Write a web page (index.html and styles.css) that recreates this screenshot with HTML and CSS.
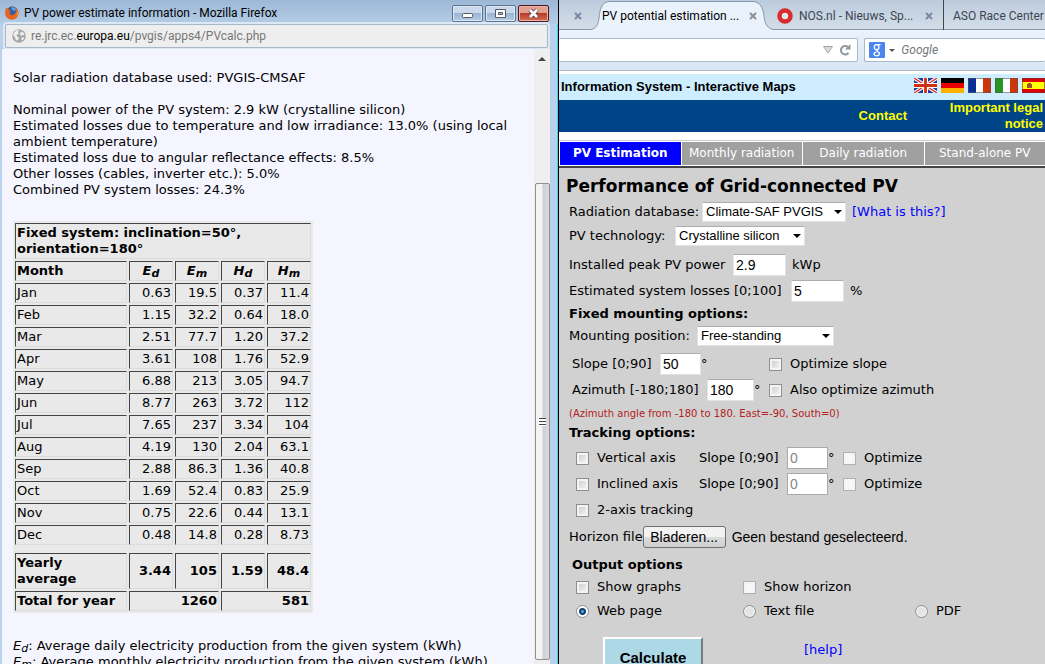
FILE: index.html
```html
<!DOCTYPE html>
<html lang="en">
<head>
<meta charset="utf-8">
<title>PV power estimate information</title>
<link rel="stylesheet" href="styles.css">
</head>
<body>
<main class="desktop">
  <section class="popup">
    <header class="titlebar">
      <svg class="fox" viewBox="0 0 14 14" aria-hidden="true"><circle cx="7" cy="7" r="6.5" fill="#d9541b"/><circle cx="7.4" cy="5.4" r="4.8" fill="#2b5ea8"/><path d="M6 1.5c2-.8 4.500 0 5.500 2L9 5 6.500 3.500z" fill="#5f9fd8"/><path d="M.6 3 2 1.500l.6 1.500 2.200.2-.6 1.500 2 1-1.700 1.300c.5 2 3 2.400 4.600 1.300 1.700-1.200 2-3.300 1.700-5.300 2 2 2.900 4.200 2.300 6-1 3.500-3.600 4.700-6.300 4.600C3 13.500.5 11 .3 7.500z" fill="#e6651e"/><path d="M12.800 5c.8 3.500-1.500 6.800-5 7.200 3-.2 4.500-2.800 4.200-5.200z" fill="#fbc634"/></svg>
      <h1 class="window-title">PV power estimate information - Mozilla Firefox</h1>
      <div class="window-buttons">
        <button class="win-btn" aria-label="Minimize"><svg viewBox="0 0 13 11"><rect x="1.500" y="5.500" width="10" height="4" rx="1" fill="#fff" stroke="#545a66"/></svg></button>
        <button class="win-btn" aria-label="Maximize"><svg viewBox="0 0 13 11"><path d="M1.500 1.500h10v8h-10z" fill="#fff" stroke="#545a66"/><path d="M4.500 4.500h4v2h-4z" fill="#a9c1dc" stroke="#545a66"/></svg></button>
        <button class="win-btn win-close" aria-label="Close"><svg viewBox="0 0 13 11"><path d="M3 2l7 7M10 2l-7 7" stroke="#5b4a55" stroke-width="4.500"/><path d="M3 2l7 7M10 2l-7 7" stroke="#fff" stroke-width="2.600"/></svg></button>
      </div>
    </header>
    <div class="popup-body">
      <div class="address">
        <svg class="globe" viewBox="0 0 14 14" aria-hidden="true"><circle cx="7" cy="7" r="6.800" fill="#a6a6a6"/><path d="M2 3.500 5 1l2.500.5L6 3l1 1.500L4.500 6l.5 1.500 2 1L6 11l-2 .5-1-3-1.800-2zM9 2.500l2.500 1 1 3-2-.5-1.500 1-1-2zM9 9l2.500-1 .5 1.500-2 2z" fill="#eee"/></svg>
        <span>re.jrc.ec.<b>europa.eu</b>/pvgis/apps4/PVcalc.php</span>
      </div>
      <div class="viewport">
        <article class="report">
          <p>Solar radiation database used: PVGIS-CMSAF</p>
          <p>Nominal power of the PV system: 2.9 kW (crystalline silicon)<br>
          Estimated losses due to temperature and low irradiance: 13.0% (using local<br>
          ambient temperature)<br>
          Estimated loss due to angular reflectance effects: 8.5%<br>
          Other losses (cables, inverter etc.): 5.0%<br>
          Combined PV system losses: 24.3%</p>
          <table class="results">
            <colgroup><col class="month-col"><col><col><col><col></colgroup>
            <thead>
              <tr><th colspan="5">Fixed system: inclination=50°,<br>orientation=180°</th></tr>
              <tr><th>Month</th><th class="sym">E<sub>d</sub></th><th class="sym">E<sub>m</sub></th><th class="sym">H<sub>d</sub></th><th class="sym">H<sub>m</sub></th></tr>
            </thead>
            <tbody>
              <tr><td>Jan</td><td>0.63</td><td>19.5</td><td>0.37</td><td>11.4</td></tr>
              <tr><td>Feb</td><td>1.15</td><td>32.2</td><td>0.64</td><td>18.0</td></tr>
              <tr><td>Mar</td><td>2.51</td><td>77.7</td><td>1.20</td><td>37.2</td></tr>
              <tr><td>Apr</td><td>3.61</td><td>108</td><td>1.76</td><td>52.9</td></tr>
              <tr><td>May</td><td>6.88</td><td>213</td><td>3.05</td><td>94.7</td></tr>
              <tr><td>Jun</td><td>8.77</td><td>263</td><td>3.72</td><td>112</td></tr>
              <tr><td>Jul</td><td>7.65</td><td>237</td><td>3.34</td><td>104</td></tr>
              <tr><td>Aug</td><td>4.19</td><td>130</td><td>2.04</td><td>63.1</td></tr>
              <tr><td>Sep</td><td>2.88</td><td>86.3</td><td>1.36</td><td>40.8</td></tr>
              <tr><td>Oct</td><td>1.69</td><td>52.4</td><td>0.83</td><td>25.9</td></tr>
              <tr><td>Nov</td><td>0.75</td><td>22.6</td><td>0.44</td><td>13.1</td></tr>
              <tr><td>Dec</td><td>0.48</td><td>14.8</td><td>0.28</td><td>8.73</td></tr>
              <tr class="spacer"><td colspan="5"></td></tr>
            </tbody>
            <tfoot>
              <tr><td>Yearly<br>average</td><td>3.44</td><td>105</td><td>1.59</td><td>48.4</td></tr>
              <tr><td>Total for year</td><td colspan="2">1260</td><td colspan="2">581</td></tr>
            </tfoot>
          </table>
          <p class="legend"><i>E<sub>d</sub></i>: Average daily electricity production from the given system (kWh)<br>
          <i>E<sub>m</sub></i>: Average monthly electricity production from the given system (kWh)</p>
        </article>
        <div class="scrollbar" aria-hidden="true">
          <span class="arrow-up"></span>
          <span class="thumb"><span class="grip"></span></span>
        </div>
      </div>
    </div>
  </section>

  <section class="browser">
    <nav class="tabstrip">
      <div class="tab tab-first"><button class="tab-close" aria-label="Close tab"><svg viewBox="0 0 8 8"><path d="M1 1l6 6M7 1l-6 6"/></svg></button></div>
      <div class="tab tab-active">
        <svg class="tab-shape" viewBox="0 0 184 30" preserveAspectRatio="none" aria-hidden="true"><path d="M0 29.500C6 29 8 25 9 18 10 8 12 1.500 20 1.500H162c8 0 11 6 12 15 1 8 4 12.500 10 13V30H0z" fill="#eaf2fb"/><path d="M0 29.500C6 29 8 25 9 18 10 8 12 1.500 20 1.500H162c8 0 11 6 12 15 1 8 4 12.500 10 13" fill="none" stroke="#8797ac"/></svg>
        <span class="tab-label">PV potential estimation ...</span>
        <button class="tab-close grey" aria-label="Close tab"><svg viewBox="0 0 8 8"><path d="M1 1l6 6M7 1l-6 6"/></svg></button>
      </div>
      <div class="tab tab-nos">
        <svg class="ring" viewBox="0 0 16 16" aria-hidden="true"><circle cx="8" cy="8" r="5.500" fill="#dfe6ee" stroke="#d92b2b" stroke-width="4.500"/></svg>
        <span class="tab-label">NOS.nl - Nieuws, Sp...</span>
        <button class="tab-close" aria-label="Close tab"><svg viewBox="0 0 8 8"><path d="M1 1l6 6M7 1l-6 6"/></svg></button>
      </div>
      <div class="tab tab-aso"><span class="tab-label">ASO Race Center</span></div>
    </nav>
    <div class="toolbar">
      <div class="url-box">
        <input class="url-input" type="text" aria-label="Address">
        <svg class="url-drop" viewBox="0 0 10 8" aria-hidden="true"><path d="M.5.5h9L5 7z" fill="#dcdcdc" stroke="#a5a5a5"/></svg>
        <button class="reload" aria-label="Reload"><svg viewBox="0 0 12 12"><path d="M9 3.200A4.200 4.200 0 1 0 9.500 8.800" fill="none" stroke="#8f989f" stroke-width="2"/><path d="M11.500 0v5.500H6z" fill="#8f989f"/></svg></button>
      </div>
      <div class="search-box">
        <svg class="g-logo" viewBox="0 0 16 16" aria-hidden="true"><rect width="16" height="16" rx="1" fill="#4a86ee"/><ellipse cx="7.600" cy="5.200" rx="2.300" ry="2.500" fill="none" stroke="#fff" stroke-width="1.300"/><path d="M8.500 2.600H11.500M9 7.500c-2 1-1.500 1.500 0 2.300 2.700 1.200 1.500 4-1.300 4-3.200 0-3.600-3-.4-3.600" fill="none" stroke="#fff" stroke-width="1.300"/></svg>
        <span class="g-drop"></span>
        <input class="search-input" type="text" placeholder="Google" aria-label="Search">
      </div>
    </div>
    <div class="site">
      <div class="site-head">
        <strong>Information System - Interactive Maps</strong>
        <div class="flags">
          <svg viewBox="0 0 23 15" role="img" aria-label="English"><path fill="#263b93" d="M0 0h23v15H0z"/><path d="M0 0l23 15M23 0L0 15" stroke="#fff" stroke-width="3.500"/><path d="M0 0l23 15M23 0L0 15" stroke="#d22" stroke-width="1.200"/><path d="M11.500 0v15M0 7.500h23" stroke="#fff" stroke-width="5"/><path d="M11.500 0v15M0 7.500h23" stroke="#d03010" stroke-width="2.800"/></svg>
          <svg viewBox="0 0 23 15" role="img" aria-label="German"><path d="M0 0h23v5H0z"/><path fill="#e80000" d="M0 5h23v5H0z"/><path fill="#fcb000" d="M0 10h23v5H0z"/></svg>
          <svg viewBox="0 0 23 15" role="img" aria-label="French"><path fill="#fff" d="M0 0h23v15H0z"/><path fill="#0b2d9a" d="M0 0h8v15H0z"/><path fill="#d0350a" d="M15 0h8v15h-8z"/><path d="M.5.500h22v14H.5z" fill="none" stroke="#555" stroke-opacity=".6"/></svg>
          <svg viewBox="0 0 23 15" role="img" aria-label="Italian"><path fill="#fff" d="M0 0h23v15H0z"/><path fill="#299426" d="M0 0h8v15H0z"/><path fill="#d0350a" d="M15 0h8v15h-8z"/><path d="M.5.500h22v14H.5z" fill="none" stroke="#555" stroke-opacity=".6"/></svg>
          <svg viewBox="0 0 23 15" role="img" aria-label="Spanish"><path fill="#e00000" d="M0 0h23v15H0z"/><path fill="#ff0" d="M0 4h23v7H0z"/><path fill="#a0522d" d="M5 6h1V5h3v1h1v4H5z"/><path d="M.5.500h22v14H.5z" fill="none" stroke="#633" stroke-opacity=".6"/></svg>
        </div>
      </div>
      <div class="site-links"><a href="#contact">Contact</a><a class="legal" href="#legal">Important legal notice</a></div>
      <nav class="pv-tabs">
        <a class="current" href="#pv">PV Estimation</a><a href="#monthly">Monthly radiation</a><a href="#daily">Daily radiation</a><a href="#alone">Stand-alone PV</a>
      </nav>
      <form class="pv-form">
        <h2>Performance of Grid-connected PV</h2>
        <div class="row short">
          <label class="w-database" for="db">Radiation database:</label>
          <span class="select w-144"><select id="db"><option>Climate-SAF PVGIS</option></select></span>
          <a class="help" href="#what">[What is this?]</a>
        </div>
        <div class="row short">
          <label class="w-tech" for="tech">PV technology:</label>
          <span class="select w-130"><select id="tech"><option>Crystalline silicon</option></select></span>
        </div>
        <div class="row gap-top">
          <label class="w-peak" for="peak">Installed peak PV power</label>
          <input class="text w-52" id="peak" type="text" value="2.9"><span class="unit">kWp</span>
        </div>
        <div class="row">
          <label class="w-loss" for="loss">Estimated system losses [0;100]</label>
          <input class="text w-52" id="loss" type="text" value="5"><span class="unit">%</span>
        </div>
        <h3>Fixed mounting options:</h3>
        <div class="row short">
          <label class="w-mount" for="mount">Mounting position:</label>
          <span class="select w-136"><select id="mount"><option>Free-standing</option></select></span>
        </div>
        <div class="mount-grid">
          <div class="row"><label class="w-slope" for="slope">Slope [0;90]</label><input class="text w-40" id="slope" type="text" value="50"><span>°</span></div>
          <div class="row"><input class="check" id="opt-slope" type="checkbox"><label for="opt-slope">Optimize slope</label></div>
          <div class="row"><label class="w-azimuth" for="azimuth">Azimuth [-180;180]</label><input class="text w-46" id="azimuth" type="text" value="180"><span>°</span></div>
          <div class="row"><input class="check" id="opt-az" type="checkbox"><label for="opt-az">Also optimize azimuth</label></div>
        </div>
        <p class="note">(Azimuth angle from -180 to 180. East=-90, South=0)</p>
        <h3 class="tracking-title">Tracking options:</h3>
        <div class="track-grid">
          <div class="row"><input class="check" id="vert" type="checkbox"><label for="vert">Vertical axis</label></div>
          <div class="row"><label class="w-slope" for="vslope">Slope [0;90]</label><input class="text w-40" id="vslope" type="text" value="0" disabled><span>°</span></div>
          <div class="row"><input class="check" id="vopt" type="checkbox" disabled><label for="vopt">Optimize</label></div>
          <div class="row"><input class="check" id="incl" type="checkbox"><label for="incl">Inclined axis</label></div>
          <div class="row"><label class="w-slope" for="islope">Slope [0;90]</label><input class="text w-40" id="islope" type="text" value="0" disabled><span>°</span></div>
          <div class="row"><input class="check" id="iopt" type="checkbox" disabled><label for="iopt">Optimize</label></div>
          <div class="row"><input class="check" id="two" type="checkbox"><label for="two">2-axis tracking</label></div>
        </div>
        <div class="row file">
          <label for="horizon">Horizon file</label><button class="browse" id="horizon" type="button">Bladeren...</button><output class="file-name">Geen bestand geselecteerd.</output>
        </div>
        <h3 class="output-title">Output options</h3>
        <div class="output-grid">
          <div class="row short"><input class="check" id="graphs" type="checkbox"><label for="graphs">Show graphs</label></div>
          <div class="row short"><input class="check" id="showh" type="checkbox" disabled><label for="showh">Show horizon</label></div>
          <div></div>
          <div class="row short"><input class="radio" id="web" name="format" type="radio" checked><label for="web">Web page</label></div>
          <div class="row short"><input class="radio" id="txt" name="format" type="radio"><label for="txt">Text file</label></div>
          <div class="row short"><input class="radio" id="pdf" name="format" type="radio"><label for="pdf">PDF</label></div>
        </div>
        <div class="actions"><button class="calculate" type="button">Calculate</button><a class="help" href="#help">[help]</a></div>
      </form>
    </div>
  </section>
</main>
</body>
</html>
```

FILE: styles.css
```css
* { box-sizing: border-box; }
body { margin: 0; font: 13px/16px Verdana, "DejaVu Sans", sans-serif; color: #000; }
button, input, select { font: inherit; color: inherit; margin: 0; padding: 0; }
a { text-decoration: none; }
svg { display: block; }

.desktop {
  display: grid;
  grid-template-columns: 559fr 486fr;
  height: 100vh;
  overflow: hidden;
}

/* Result window */
.popup {
  display: flex;
  flex-direction: column;
  min-width: 0;
  min-height: 0;
  background: #b9d1ea;
  border-right: 1px solid #000;
  box-shadow: inset -1px 0 #3fd0f0;
}
.titlebar {
  display: flex;
  align-items: center;
  height: 24px;
  padding: 2px 9px 0 5px;
  background: linear-gradient(#9db8d6, #b4cde6);
  font: 12px/16px "Segoe UI", Roboto, sans-serif;
}
.fox { width: 14px; height: 14px; margin-right: 5px; }
.window-title { flex: 1; margin: 0; font-size: 12px; font-weight: 400; white-space: nowrap; }
.window-buttons { display: flex; gap: 2px; }
.win-btn {
  display: flex;
  align-items: center;
  justify-content: center;
  width: 31px;
  height: 17px;
  border: 1px solid #5c7490;
  border-radius: 2px;
  background: linear-gradient(#c9d9eb 48%, #9bb5d2 50%, #b5cde6);
  box-shadow: inset 0 0 0 1px #dbe7f3;
}
.win-btn svg { width: 13px; height: 11px; }
.win-close { border-color: #4a1420; background: linear-gradient(#e0a08f 45%, #b93c28 50%, #d46e55); box-shadow: inset 0 0 0 1px #e8b5a8; }
.popup-body {
  display: flex;
  flex: 1;
  flex-direction: column;
  min-height: 0;
  margin: 0 8px 0 2px;
}
.address {
  display: flex;
  align-items: center;
  gap: 5px;
  height: 24px;
  margin: 0 2px 1px 3px;
  padding-left: 6px;
  border: 1px solid #a9b7c8;
  border-radius: 2px;
  background: #eee;
  box-shadow: 0 0 0 2px #dce8f5;
  color: #777;
  font: 12px/16px "Segoe UI", Roboto, sans-serif;
}
.address b { color: #000; font-weight: 400; }
.globe { width: 14px; height: 14px; }
.viewport { display: flex; flex: 1; min-height: 0; z-index: 1; }
.report {
  flex: 1;
  overflow: hidden;
  padding: 21px 10px 0 11px;
  background: #f5f5ff;
  white-space: nowrap;
}
.report p { margin: 0 0 16px; }
sub { font-size: 11px; line-height: 0; vertical-align: -2px; }
.results {
  width: 300px;
  margin-top: 23px;
  table-layout: fixed;
  border-spacing: 2px;
  background: #e9e9e9;
}
.results col { width: 44px; }
.results .month-col { width: auto; }
.results th, .results td {
  padding: 1px;
  border: 1px solid;
  border-color: #444 #dcdcdc #dcdcdc #444;
  text-align: right;
}
.results th, .results tr > :first-child { text-align: left; }
.results .sym { text-align: center; font-style: italic; }
.results tfoot { font-weight: 700; }
.results .spacer td { height: 4px; padding: 0; border: 0; }
.report .legend { margin-top: 25px; }
.scrollbar {
  display: flex;
  flex-direction: column;
  align-items: center;
  width: 16px;
  background: #efefef;
}
.arrow-up { margin-top: 8px; border: 4px solid transparent; border-top: 0; border-bottom-color: #444; }
.thumb {
  display: flex;
  align-items: center;
  justify-content: center;
  flex: 1;
  width: 15px;
  margin: 122px 0 4px;
  border: 1px solid #8e8e8e;
  border-radius: 2px;
  background: linear-gradient(90deg, #f4f4f4 45%, #cfcfd6 55%, #d9d9de);
}
.grip { width: 7px; height: 8px; background: repeating-linear-gradient(#444 0 1px, #fff 1px 3px); }

/* Browser chrome */
.browser { display: flex; flex-direction: column; min-width: 0; min-height: 0; overflow: hidden; background: #fff; }
.tabstrip {
  display: flex;
  flex: none;
  height: 30px;
  background: linear-gradient(#bccbdc, #d3dee9);
  box-shadow: inset 0 -1px #8797ac;
  color: #3c4652;
  font: 12px/16px "Segoe UI", Roboto, sans-serif;
}
.tab { display: flex; align-items: center; padding-top: 2px; white-space: nowrap; }
.tab-label { flex: 1; overflow: hidden; }
.tab-close { display: flex; width: 8px; height: 8px; border: 0; background: none; }
.tab-close svg { width: 8px; height: 8px; stroke: #7c87a5; stroke-width: 2; }
.tab-close.grey svg { stroke: #8f8f8f; }
.tab-first { width: 31px; padding-left: 15px; }
.tab-active { position: relative; width: 184px; padding: 2px 17px 0 12px; color: #000; }
.tab-shape { position: absolute; inset: 0; width: 100%; height: 100%; }
.tab-active > .tab-label, .tab-active > .tab-close { position: relative; }
.tab-nos { width: 170px; padding: 2px 10px 0 3px; border-right: 1px solid #444; }
.ring { width: 16px; height: 16px; margin-right: 6px; }
.tab-aso { flex: 1; min-width: 0; padding-left: 9px; }
.toolbar {
  display: flex;
  flex: none;
  gap: 6px;
  height: 41px;
  padding: 8px 0 8px;
  border-bottom: 1px solid #a9b8ca;
  background: linear-gradient(#eaf2fb, #d9e6f4);
}
.url-box, .search-box { display: flex; align-items: center; border: 1px solid #a9b8ca; border-radius: 2px; background: #fff; }
.url-box { flex: 304; border-left: 0; }
.search-box { flex: 179; min-width: 0; padding-left: 4px; border-right: 0; }
.url-input, .search-input { flex: 1; min-width: 0; border: 0; background: none; }
.url-drop { width: 10px; height: 8px; margin-right: 6px; }
.reload { width: 12px; height: 12px; margin-right: 6px; border: 0; background: none; }
.reload svg { width: 12px; height: 12px; }
.g-logo { width: 16px; height: 16px; }
.g-drop { margin: 0 6px 0 4px; border: 3px solid transparent; border-top-color: #555; border-bottom: 0; }
.search-input { font: italic 12px/16px "Segoe UI", Roboto, sans-serif; }
.search-input::placeholder { color: #777; opacity: 1; }

/* Site header */
.site { flex: 1; display: flex; flex-direction: column; padding-top: 3px; }
.site-head {
  display: flex;
  flex: none;
  align-items: center;
  justify-content: space-between;
  height: 26px;
  padding-left: 2px;
  background: #ceeeff;
  font: 13px/16px Arial, "Liberation Sans", sans-serif;
  white-space: nowrap;
}
.flags { display: flex; gap: 4px; padding-bottom: 4px; }
.flags svg { width: 23px; height: 15px; }
.site-links {
  display: flex;
  align-items: center;
  justify-content: flex-end;
  gap: 32px;
  height: 32px;
  padding-right: 2px;
  background: #004488;
  font: 700 13px/16px Arial, "Liberation Sans", sans-serif;
}
.site-links a { color: #ff0; }
.legal { width: 104px; text-align: right; }
.pv-tabs {
  display: grid;
  grid-template-columns: repeat(4, 1fr);
  gap: 1px;
  margin-top: 8px;
  padding: 1px 0 1px 1px;
  border-top: 1px solid #ccc;
  border-bottom: 2px solid #444;
  font-size: 12px;
}
.pv-tabs a { background: #a0a0a0; color: #fff; line-height: 23px; text-align: center; white-space: nowrap; overflow: hidden; }
.pv-tabs .current { background: #00f; font-weight: 700; }

/* Estimation form */
.pv-form { flex: 1; padding: 4px 0 0 10px; background: #d1d1d1; white-space: nowrap; }
h2 { margin: 0 0 0 -3px; font-size: 17px; line-height: 28px; }
h3 { margin: 0; font-size: 13px; line-height: 20px; }
.row { display: flex; align-items: center; height: 26px; }
.short { height: 24px; }
.gap-top { margin-top: 4px; }
.w-database { width: 133px; }
.w-tech { width: 106px; }
.w-peak { width: 164px; }
.w-loss { width: 222px; }
.w-mount { width: 128px; }
.w-slope { width: 88px; }
.w-azimuth { width: 135px; }
.w-40 { width: 41px; }
.w-46 { width: 47px; }
.w-52 { width: 53px; }
.w-130 { width: 130px; }
.w-136 { width: 137px; }
.w-144 { width: 144px; }
.text, .browse, .file-name { font: 14px/16px Arial, "Liberation Sans", sans-serif; }
.text {
  height: 22px;
  padding: 0 2px;
  border: 1px solid #e2e3ea;
  border-top-color: #abadb3;
  background: #fff;
}
.text:disabled { border: 1px solid #aaa; color: #888; }
.unit { margin-left: 6px; }
.select { position: relative; }
.select select {
  width: 100%;
  height: 20px;
  display: block;
  padding: 0 14px 0 3px;
  border: 1px solid #e2e3ea;
  border-top-color: #abadb3;
  background: #fff;
  font: 13px/16px Arial, "Liberation Sans", sans-serif;
  appearance: none;
}
.select::after {
  content: "";
  position: absolute;
  top: 8px;
  right: 4px;
  border: 4px solid transparent;
  border-top-color: #000;
  border-bottom: 0;
  pointer-events: none;
}
.help { margin-left: 6px; color: #00f; }
.mount-grid { display: grid; grid-template-columns: 197px 1fr; margin: 3px 0 0 3px; }
.track-grid { display: grid; grid-template-columns: 123px 144px 1fr; margin: 4px 0 0 7px; }
.output-grid { display: grid; grid-template-columns: 167px 172px 1fr; margin-left: 7px; }
.check, .radio { flex: none; appearance: none; width: 13px; height: 13px; margin-right: 8px; }
.check {
  border: 1px solid #8e8f8f;
  background: linear-gradient(135deg, #c8c8cc, #fafafa);
  box-shadow: inset 0 0 0 2px #f4f4f4;
}
.check:disabled { border-color: #b1b1b1; background: #f8f8f8; }
.radio { border: 1px solid #8e8f8f; border-radius: 50%; background: radial-gradient(#e4e4e4 40%, #fff); }
.radio:checked { background: radial-gradient(circle, #3aa8e0 0 1px, #123f70 2px 3px, #fff 4px); }
.note { margin: 0; color: #b22222; font-size: 10px; line-height: 22px; }
.tracking-title { line-height: 16px; }
.file { margin-top: 1px; }
.browse {
  width: 83px;
  height: 22px;
  border: 1px solid #707070;
  border-radius: 3px;
  background: linear-gradient(#f2f2f2 50%, #dcdcdc 50%, #cfcfcf);
}
.file-name { margin-left: 6px; }
.output-title { margin: 5px 0 0 3px; }
.actions { display: flex; align-items: flex-start; margin: 14px 0 0 34px; }
.actions .help { margin: 5px 0 0 101px; }
.calculate {
  width: 100px;
  height: 42px;
  border: 2px solid;
  border-color: #fff #7a7a7a #7a7a7a #fff;
  background: #add8e6;
  font: 700 15px/16px Arial, "Liberation Sans", sans-serif;
}
```
